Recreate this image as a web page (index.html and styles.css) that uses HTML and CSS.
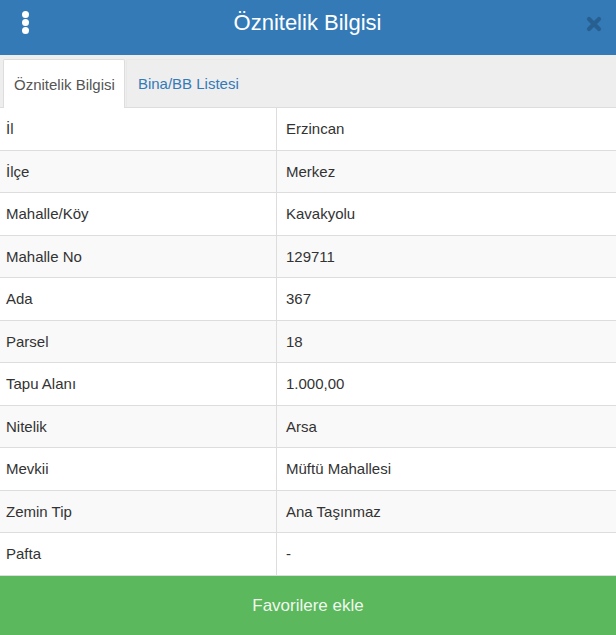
FILE: index.html
```html
<!DOCTYPE html>
<html lang="tr">
<head>
<meta charset="utf-8">
<title>Öznitelik Bilgisi</title>
<link rel="stylesheet" href="styles.css">
</head>
<body>
<div class="panel">
  <header class="topbar">
    <span class="kebab" aria-hidden="true"><i></i><i></i><i></i></span>
    <h1 class="title">Öznitelik Bilgisi</h1>
    <span class="close" aria-hidden="true">
      <svg width="16" height="16" viewBox="0 0 16 16"><path d="M3 3 L13 13 M13 3 L3 13" stroke="#285f91" stroke-width="4.2" stroke-linecap="round"/></svg>
    </span>
  </header>
  <nav class="tabs">
    <a class="tab active">Öznitelik Bilgisi</a>
    <a class="tab">Bina/BB Listesi</a>
  </nav>
  <div class="table">
    <div class="row"><div class="cell key">İl</div><div class="cell val">Erzincan</div></div>
    <div class="row"><div class="cell key">İlçe</div><div class="cell val">Merkez</div></div>
    <div class="row"><div class="cell key">Mahalle/Köy</div><div class="cell val">Kavakyolu</div></div>
    <div class="row"><div class="cell key">Mahalle No</div><div class="cell val">129711</div></div>
    <div class="row"><div class="cell key">Ada</div><div class="cell val">367</div></div>
    <div class="row"><div class="cell key">Parsel</div><div class="cell val">18</div></div>
    <div class="row"><div class="cell key">Tapu Alanı</div><div class="cell val">1.000,00</div></div>
    <div class="row"><div class="cell key">Nitelik</div><div class="cell val">Arsa</div></div>
    <div class="row"><div class="cell key">Mevkii</div><div class="cell val">Müftü Mahallesi</div></div>
    <div class="row"><div class="cell key">Zemin Tip</div><div class="cell val">Ana Taşınmaz</div></div>
    <div class="row"><div class="cell key">Pafta</div><div class="cell val">-</div></div>
  </div>
  <button class="fav">Favorilere ekle</button>
</div>
</body>
</html>
```
FILE: styles.css
```css
* { box-sizing: border-box; }
html, body { margin: 0; padding: 0; }
body {
  font-family: "Liberation Sans", Arial, sans-serif;
  color: #333;
  background: #fff;
  overflow: hidden;
}
.panel { width: 616px; display: flex; flex-direction: column; }
.topbar {
  height: 55px;
  background: #337ab7;
  display: flex;
  align-items: center;
  justify-content: space-between;
  padding: 0 14px 0 22px;
}
.kebab {
  width: 7px;
  display: flex;
  flex-direction: column;
  gap: 1px;
  margin-top: -10px;
}
.kebab i {
  display: block;
  width: 7px;
  height: 7px;
  border-radius: 50%;
  background: #fff;
}
.title {
  margin: 0 0 10px 0;
  font-size: 22px;
  font-weight: normal;
  color: #fff;
  line-height: 26px;
}
.close { width: 16px; height: 16px; margin-top: -7px; display: flex; }
.tabs {
  height: 53px;
  background: #eee;
  border-bottom: 1px solid #ddd;
  padding: 4px 0 0 3px;
  display: flex;
  gap: 1px;
}
.tab {
  font-size: 15px;
  line-height: 21px;
  padding: 13px 10px 13px 11px;
  color: #337ab7;
  border: 1px solid #e8e8e8;
  border-bottom: none;
  border-right-color: #eee;
  border-radius: 2px 2px 0 0;
  height: 48px;
}
.tab.active {
  background: #fff;
  color: #555;
  border-color: #ddd;
  padding: 14px 9px 13px 10px;
  height: 49px;
}
.table { display: flex; flex-direction: column; }
.row {
  display: grid;
  grid-template-columns: 277px 1fr;
  border-bottom: 1px solid #ddd;
  font-size: 15px;
  line-height: 21.5px;
}
.row:nth-child(even) { background: #f9f9f9; }
.cell { padding: 10px 6px; }
.key { border-right: 1px solid #ddd; }
.val { padding-left: 9px; }
.fav {
  height: 60px;
  border: none;
  background: #5cb85c;
  color: rgba(255,255,255,0.92);
  font-family: "Liberation Sans", Arial, sans-serif;
  font-size: 17px;
  width: 100%;
  margin: 0;
  padding: 0;
}
```
